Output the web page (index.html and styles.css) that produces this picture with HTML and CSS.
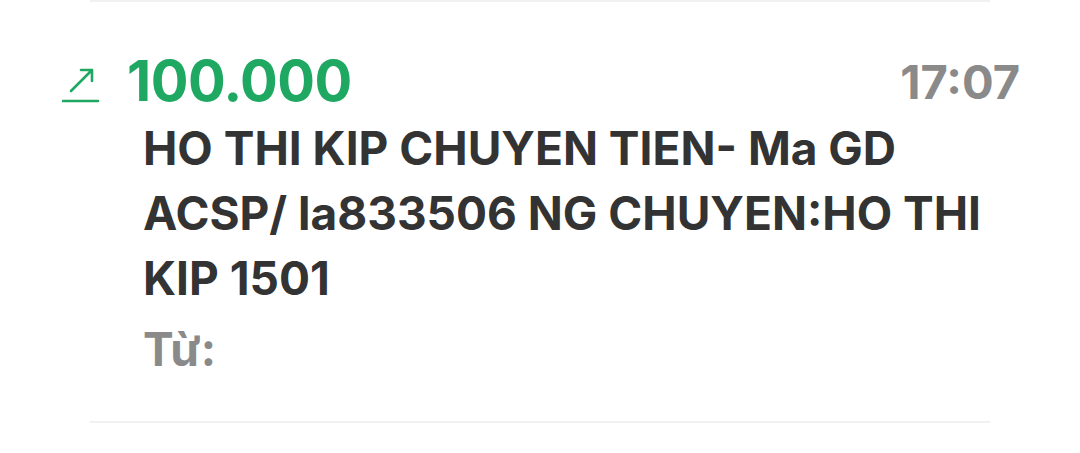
FILE: index.html
```html
<!DOCTYPE html>
<html lang="vi">
<head>
  <meta charset="UTF-8" />
  <meta name="viewport" content="width=device-width, initial-scale=1.0"/>
  <title>Giao dịch</title>
  <link rel="stylesheet" href="styles.css">
</head>
<body>
  <div class="divider"></div>

  <!-- Transaction row -->
  <div class="txn">
    <div class="txn-head">
      <svg class="txn-icon" width="38" height="36" viewBox="0 0 38 36">
        <path d="M9 24 L30 3 M19 3 H30 V14" fill="none" stroke="#1ea862" stroke-width="2.6" stroke-linecap="round" stroke-linejoin="round"/>
        <path d="M1 34 H36" fill="none" stroke="#1ea862" stroke-width="2.6" stroke-linecap="round"/>
      </svg>
      <span class="amount">100.000</span>
      <span class="time">17:07</span>
    </div>
    <div class="txn-body">
      <p class="desc">HO THI KIP CHUYEN TIEN- Ma GD ACSP/ la833506 NG CHUYEN:HO THI KIP 1501</p>
      <p class="from">Từ:</p>
    </div>
  </div>

  <div class="divider"></div>
</body>
</html>
```

FILE: styles.css
```css
body {
  margin: 0;
  background: #fff;
  font-family: Inter, "Noto Sans", sans-serif;
  color: #333;
}
.divider {
  height: 2px;
  margin: 0 90px;
  background: #f1f1f1;
}
.txn {
  padding: 49px 60px 34px 62px;
}
.txn-head {
  display: flex;
  align-items: center;
  height: 60px;
}
.txn-icon {
  flex: none;
  margin-top: 8px;
}
.amount {
  margin-left: 27px;
  font-size: 56px;
  font-weight: 700;
  color: #1ea862;
  letter-spacing: -0.5px;
}
.time {
  margin-left: auto;
  font-size: 47px;
  font-weight: 700;
  color: #8a8a8a;
}
.txn-body {
  padding-left: 81px;
  padding-right: 10px;
}
.desc {
  margin: 5px 0 0;
  font-size: 46px;
  line-height: 65px;
  font-weight: 700;
  color: #333;
}
.from {
  margin: 0;
  font-size: 46px;
  line-height: 76px;
  font-weight: 700;
  color: #8a8a8a;
}
```
